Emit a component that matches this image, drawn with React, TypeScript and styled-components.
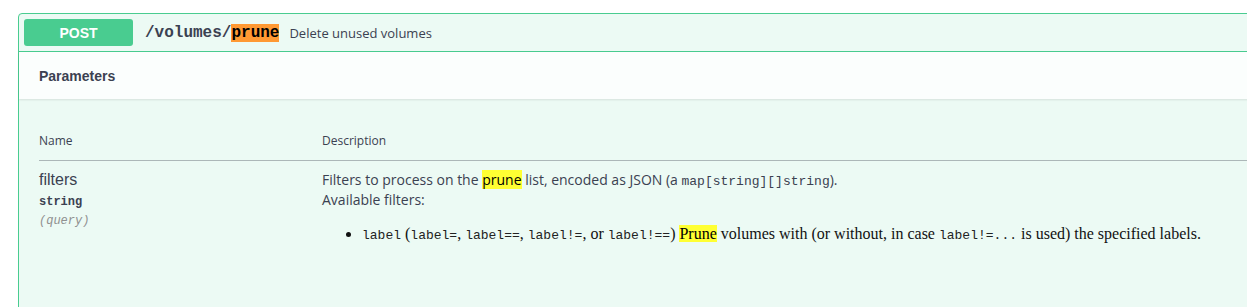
import React from 'react';
import styled, { createGlobalStyle } from 'styled-components';

const GlobalStyle = createGlobalStyle`
    body {
        margin: 0;
        background: #fff;
        overflow: hidden;
        font-family: "Open Sans", sans-serif;
        color: #3b4151;
    }
`;

const Page = styled.div`
    padding: 13px 0 0 18px;
`;

const OpBlock = styled.div`
    width: 1300px;
    min-height: 320px;
    border: 1px solid #49cc90;
    border-radius: 4px;
    background: rgba(73, 204, 144, 0.1);
`;

const Summary = styled.div`
    display: flex;
    align-items: center;
    padding: 5px;
    border-bottom: 1px solid #49cc90;
`;

const Method = styled.span`
    display: inline-flex;
    align-items: center;
    justify-content: center;
    width: 109px;
    height: 27px;
    border-radius: 3px;
    background: #49cc90;
    color: #fff;
    font-family: "Liberation Sans", Arial, sans-serif;
    font-weight: 700;
    font-size: 14px;
`;

const Path = styled.span`
    margin-left: 12px;
    font-family: "Liberation Mono", "Courier New", monospace;
    font-weight: 700;
    font-size: 16px;
    color: #3b4151;
`;

const Hit = styled.mark<{ $tone: 'orange' | 'yellow' }>`
    background: ${p => (p.$tone === 'orange' ? '#ff9933' : '#ffff33')};
    color: #000;
    padding: 0;
`;

const SummaryText = styled.span`
    margin-left: 10px;
    font-size: 13px;
    color: #3b4151;
`;

const SectionHeader = styled.div`
    display: flex;
    align-items: center;
    height: 46px;
    padding: 1px 20px 0;
    background: rgba(255, 255, 255, 0.8);
    box-shadow: 0 1px 2px rgba(0, 0, 0, 0.1);
`;

const SectionTitle = styled.h4`
    margin: 0;
    font-family: "Liberation Sans", Arial, sans-serif;
    font-size: 14px;
    font-weight: 700;
    color: #3b4151;
`;

const TableWrap = styled.div`
    padding: 21px 20px 20px;
`;

const Table = styled.table`
    width: 100%;
    border-collapse: collapse;
`;

const Th = styled.th<{ $w?: number }>`
    width: ${p => (p.$w ? `${p.$w}px` : 'auto')};
    padding: 13px 0 11px;
    text-align: left;
    font-size: 12px;
    font-weight: 500;
    line-height: 16px;
    color: #3b4151;
    border-bottom: 1px solid rgba(59, 65, 81, 0.2);
`;

const Td = styled.td`
    padding: 10px 0;
    vertical-align: top;
`;

const ParamName = styled.div`
    font-family: "Liberation Sans", Arial, sans-serif;
    font-size: 16px;
    line-height: 18px;
    color: #3b4151;
`;

const ParamType = styled.div`
    margin-top: 5px;
    font-family: "Liberation Mono", "Courier New", monospace;
    font-size: 12px;
    font-weight: 700;
    line-height: 16px;
    color: #3b4151;
`;

const ParamIn = styled.div`
    margin-top: 3px;
    font-family: "Liberation Mono", "Courier New", monospace;
    font-size: 12px;
    font-style: italic;
    line-height: 16px;
    color: #909090;
`;

const Markdown = styled.div`
    font-size: 14px;
    line-height: 18px;
    color: #3b4151;
    p {
        margin: 0;
    }
    code {
        font-family: "Liberation Mono", "Courier New", monospace;
        font-size: 13px;
    }
`;

const List = styled.ul`
    margin: 15px 0 0;
    padding-left: 40px;
    font-family: "Liberation Serif", "Times New Roman", serif;
    font-size: 16px;
    line-height: 20px;
    color: #111;
    code {
        font-size: 13px;
        color: #222;
    }
`;

function App() {
    return (
        <Page>
            <GlobalStyle />
            <OpBlock>
                <Summary>
                    <Method>POST</Method>
                    <Path>/volumes/<Hit $tone="orange">prune</Hit></Path>
                    <SummaryText>Delete unused volumes</SummaryText>
                </Summary>
                <SectionHeader>
                    <SectionTitle>Parameters</SectionTitle>
                </SectionHeader>
                <TableWrap>
                    <Table>
                        <thead>
                            <tr>
                                <Th $w={283}>Name</Th>
                                <Th>Description</Th>
                            </tr>
                        </thead>
                        <tbody>
                            <tr>
                                <Td>
                                    <ParamName>filters</ParamName>
                                    <ParamType>string</ParamType>
                                    <ParamIn>(query)</ParamIn>
                                </Td>
                                <Td>
                                    <Markdown>
                                        <p>
                                            Filters to process on the <Hit $tone="yellow">prune</Hit> list, encoded as JSON (a <code>map[string][]string</code>).
                                            <br />
                                            Available filters:
                                        </p>
                                        <List>
                                            <li>
                                                <code>label</code> (<code>label=</code>, <code>label==</code>, <code>label!=</code>, or <code>label!==</code>) <Hit $tone="yellow">Prune</Hit> volumes with (or without, in case <code>label!=...</code> is used) the specified labels.
                                            </li>
                                        </List>
                                    </Markdown>
                                </Td>
                            </tr>
                        </tbody>
                    </Table>
                </TableWrap>
            </OpBlock>
        </Page>
    );
}

export default App;
